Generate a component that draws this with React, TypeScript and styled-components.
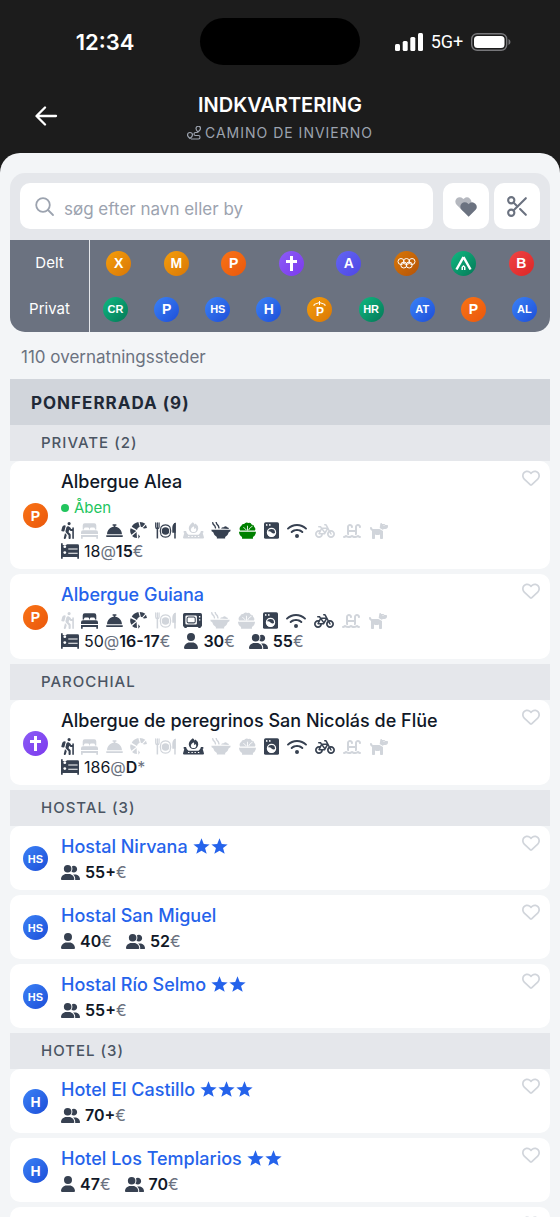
import React from "react";
import styled, { createGlobalStyle } from "styled-components";
import { FaBicycle, FaPersonHiking, FaBellConcierge, FaWaterLadder, FaDog, FaRegHeart, FaUser, FaUserGroup, FaWifi } from "react-icons/fa6";
import { FiScissors } from "react-icons/fi";

const GlobalStyle = createGlobalStyle`
  * { box-sizing: border-box; }
  html, body { margin: 0; background: #1c1c1c; }
  body { font-family: Inter, "Noto Sans", sans-serif; color: #111827; }
  button { font: inherit; border: 0; padding: 0; background: none; color: inherit; cursor: pointer; }
  h1, h2, h3, h4, p, ul { margin: 0; padding: 0; font-weight: inherit; }
  ul { list-style: none; }
  svg { display: block; flex: none; }
`;

const Screen = styled.div`
  display: flex;
  flex-direction: column;
  height: 100vh;
  overflow: hidden;
  background: #1c1c1c;
`;

const StatusBar = styled.div`
  display: grid;
  grid-template-columns: 1fr 160px 1fr;
  align-items: center;
  flex: none;
  padding-top: 18px;
  color: #fff;
`;

const Clock = styled.time`
  padding-left: 10px;
  text-align: center;
  font-size: 22px;
  line-height: 28px;
  font-weight: 600;
`;

const Island = styled.div`
  height: 47px;
  border-radius: 24px;
  background: #000;
`;

const Signals = styled.div`
  display: flex;
  align-items: center;
  justify-content: center;
  gap: 8px;
  padding-right: 14px;
  font: 400 18px/24px Roboto, sans-serif;
`;

const TitleBar = styled.header`
  display: grid;
  grid-template-columns: 60px 1fr 60px;
  flex: none;
  padding: 28px 0 8px;
  color: #fff;
`;

const BackButton = styled.button`
  display: flex;
  align-items: center;
  justify-content: flex-end;
  height: 46px;
`;

const Titles = styled.div`
  text-align: center;
`;

const Title = styled.h1`
  font-size: 20px;
  line-height: 24px;
  font-weight: 600;
`;

const Subtitle = styled.p`
  display: flex;
  align-items: center;
  justify-content: center;
  gap: 4px;
  margin-top: 4px;
  color: #9ca3af;
  font-size: 14px;
  line-height: 24px;
  letter-spacing: 1px;
`;

const Sheet = styled.main`
  flex: 1;
  min-height: 0;
  overflow-y: auto;
  scrollbar-width: none;
  padding: 20px 10px 0;
  border-radius: 20px 20px 0 0;
  background: #f3f5f7;
`;

const Filters = styled.section`
  overflow: hidden;
  border-radius: 15px;
  background: #e5e7eb;
`;

const SearchRow = styled.div`
  display: flex;
  gap: 5px;
  padding: 10px 10px 11px;
`;

const SearchBox = styled.label`
  display: flex;
  flex: 1;
  align-items: center;
  gap: 9px;
  min-width: 0;
  height: 46px;
  margin-right: 5px;
  padding: 0 14px;
  border-radius: 10px;
  background: #fff;
  color: #9ca3af;
`;

const SearchInput = styled.input`
  flex: 1;
  min-width: 0;
  padding: 5px 0 0;
  border: 0;
  outline: 0;
  background: none;
  color: #111827;
  font: 400 17px/24px Inter, sans-serif;
  &::placeholder { color: #9ca3af; opacity: 1; }
`;

const ToolButton = styled.button`
  display: flex;
  align-items: center;
  justify-content: center;
  width: 46px;
  height: 46px;
  border-radius: 10px;
  background: #fff;
  color: #6b7280;
`;

const FilterRow = styled.div`
  display: grid;
  grid-template-columns: 80px 1fr;
  height: 46px;
  background: #6b7280;
`;

const FilterLabel = styled.span`
  display: flex;
  align-items: center;
  justify-content: center;
  border-right: 1px solid #e5e7eb;
  color: #fff;
  font-size: 15px;
  line-height: 20px;
`;

const FilterBadges = styled.div`
  display: flex;
  align-items: center;
  justify-content: space-around;
`;

const tones = {
  amber: "#f59e0b, #d97706",
  orange: "#f97316, #ea580c",
  purple: "#8b5cf6, #7c3aed",
  indigo: "#6366f1, #4f46e5",
  brown: "#d97706, #b45309",
  green: "#10b981, #047857",
  red: "#ef4444, #dc2626",
  blue: "#3b82f6, #1d4ed8",
};
type Tone = keyof typeof tones;

const Badge = styled.span<{ $tone: Tone; $small?: boolean }>`
  display: flex;
  align-items: center;
  justify-content: center;
  flex: none;
  width: 25px;
  height: 25px;
  border-radius: 50%;
  background: linear-gradient(135deg, ${(p) => tones[p.$tone]});
  color: #fff;
  font: 700 ${(p) => (p.$small ? 11 : 14)}px/16px "Liberation Sans", sans-serif;
`;

const Count = styled.p`
  padding: 13px 11px 10px;
  color: #6b7280;
  font-size: 17px;
  line-height: 24px;
`;

const CityHeader = styled.h2`
  padding: 12px 21px 10px;
  background: #d1d5db;
  color: #1f2937;
  font-size: 17px;
  line-height: 24px;
  font-weight: 700;
  letter-spacing: 1px;
`;

const GroupHeader = styled.h3`
  padding: 8px 31px;
  background: #e5e7eb;
  color: #4b5563;
  font-size: 15px;
  line-height: 20px;
  font-weight: 500;
  letter-spacing: 1px;
`;

const CardList = styled.ul`
  display: flex;
  flex-direction: column;
  gap: 5px;
  padding-bottom: 5px;
`;

const Card = styled.li`
  display: grid;
  grid-template-columns: 51px 1fr 28px;
  min-height: 64px;
  padding: 8px 0 7px;
  border-radius: 10px;
  background: #fff;
`;

const CardBadge = styled.div`
  display: flex;
  align-items: center;
  padding-left: 13px;
`;

const CardBody = styled.div`
  min-width: 0;
`;

const nameText = `
  display: inline-flex;
  align-items: center;
  gap: 5px;
  font-size: 18px;
  line-height: 25px;
  font-weight: 500;
`;

const Name = styled.h4`
  ${nameText}
  display: flex;
  margin-bottom: 2px;
`;

const NameLink = styled.a`
  ${nameText}
  color: #2563eb;
  text-decoration: none;
`;

const Stars = styled.span`
  display: inline-flex;
  gap: 1px;
`;

const OpenStatus = styled.p`
  display: flex;
  align-items: center;
  gap: 5px;
  color: #22c55e;
  font-size: 15px;
  line-height: 23px;
  &::before {
    content: "";
    width: 8px;
    height: 8px;
    border-radius: 50%;
    background: #22c55e;
  }
`;

const Amenities = styled.div`
  display: flex;
  align-items: center;
  gap: 8px;
  height: 21px;
  padding-top: 2px;
`;

const Amenity = styled.span<{ $state: "on" | "off" | "vegan"; $width: number }>`
  display: flex;
  align-items: center;
  justify-content: center;
  width: ${(p) => p.$width}px;
  color: ${(p) => ({ on: "#374151", off: "#d1d5db", vegan: "#008000" })[p.$state]};
`;

const Prices = styled.div`
  display: flex;
  gap: 14px;
`;

const Price = styled.span`
  display: flex;
  align-items: center;
  font-size: 16px;
  line-height: 22px;
  b { font-weight: 600; }
  svg { margin-right: 5px; color: #374151; }
`;

const SingleIcon = styled(FaUser)`
  width: 14px;
  height: 16px;
`;

const Muted = styled.span`
  color: #6b7280;
`;

const FavoriteButton = styled.button`
  align-self: start;
  color: #d1d5db;
`;

const Star = () => (
  <svg width="17" height="17" viewBox="0 0 24 24" fill="currentColor">
    <path d="M12 .5l3.200 8 8.300.5-6.500 5.200 2.300 8.200L12 17.900l-7.300 4.500L7 14.200.5 9l8.300-.5z" />
  </svg>
);

const SearchIcon = () => (
  <svg width="21" height="21" viewBox="0 0 21 21" fill="none" stroke="currentColor" strokeWidth="1.800" strokeLinecap="round">
    <circle cx="9" cy="9" r="6.800" />
    <path d="M14 14l5 5" />
  </svg>
);

const BedIcon = () => (
  <svg width="17" height="16" viewBox="0 0 50 45" fill="currentColor">
    <path d="M11 0h28q6 0 6 6v12h-4v-2q0-4-4-4h-7q-4 0-4 4v2h-2v-2q0-4-4-4h-7q-4 0-4 4v2H5V6q0-6 6-6z" />
    <path d="M6 20h38q6 0 6 6v5H0v-5q0-6 6-6zM0 34h50v11h-5v-5H5v5H0z" />
  </svg>
);

const BunkIcon = () => (
  <svg width="18" height="16" viewBox="0 0 52 45" fill="currentColor">
    <path d="M0 0h5v5h11V3h32q4 0 4 4v38h-5v-5H5v5H0z" />
    <path d="M21 17h27M21 29h27" stroke="#fff" strokeWidth="3" />
    <circle cx="11" cy="10" r="4" fill="#fff" />
    <circle cx="11" cy="27" r="4" fill="#fff" />
  </svg>
);

const CroissantIcon = () => (
  <svg width="17" height="17" viewBox="0 0 49 49" fill="currentColor">
    <path d="M5 14Q10 3 24 0l4 14q-7 2-8 9zM28 0q10 0 16 5l-9 10-4-1zM46 8l3 9-8 2-4-2zM2 18l16 8L4 37Q-2 27 2 18zM6 40l13-11 1 17q-9 0-14-6zM24 35l5 7-5 6z" />
  </svg>
);

const PlateIcon = () => (
  <svg width="21" height="17" viewBox="0 0 62 49" fill="none" stroke="currentColor" strokeWidth="3.500">
    <path d="M2 2v12q0 5 5 5t5-5V2M7 2v16" strokeLinecap="round" />
    <path d="M7 18v30" strokeWidth="4.500" />
    <path d="M18 14a17 17 0 0 1 26 0M18 38a17 17 0 0 0 26 0M18 14q-5 12 0 24M44 14q5 12 0 24" />
    <circle cx="31" cy="26" r="11" fill="currentColor" stroke="none" />
    <path d="M59 2v46" strokeWidth="4.500" />
    <path d="M61 1q-10 4-10 16v14h10z" fill="currentColor" stroke="none" />
  </svg>
);

const StoveIcon = () => (
  <svg width="21" height="17" viewBox="0 0 62 49" fill="currentColor">
    <path d="M29 0q4 3 5 7 2-1 3-3 8 6 8 14a14 14 0 0 1-28 0Q17 8 29 0zm2 12q-8 5-8 10a8 7 0 0 0 16 0q0-3-2-5-2 3-4 3 1-4-2-8z" fillRule="evenodd" />
    <path d="M2 26h7q2 9 7 11h30q5-2 7-11h7v5h-2l4 14q0 3-3 3H3q-3 0-3-3l4-14H2z" />
    <path d="M15 42.500h4M25 42.500h4M34 42.500h4M44 42.500h4" stroke="#fff" strokeWidth="3" />
  </svg>
);

const MicrowaveIcon = () => (
  <svg width="19" height="15" viewBox="0 0 56 44" fill="currentColor">
    <path d="M5 0h46q5 0 5 5v32q0 4-4 4v3h-7v-3H11v3H4v-3q-4 0-4-4V5q0-5 5-5zm6 7q-4 0-4 4v19q0 4 4 4h26q4 0 4-4V11q0-4-4-4zm36 2v4h4V9zm0 9v4h4v-4z" fillRule="evenodd" />
    <rect x="12" y="12" width="24" height="17" rx="4" fill="none" stroke="currentColor" strokeWidth="3" />
  </svg>
);

const BowlIcon = () => (
  <svg width="20" height="17" viewBox="0 0 58 49" fill="currentColor">
    <path d="M5 2q1 5 4 7t4 8M15 1q1 5 4 7t4 9" fill="none" stroke="currentColor" strokeWidth="4" strokeLinecap="round" />
    <path d="M29 19q3-5 8-4 5-6 10 0 5 1 5 5zM1 22h56q0 6-5 7-2 9-11 14v5H17v-5Q8 38 6 29q-5-1-5-7z" />
  </svg>
);

const SaladIcon = () => (
  <svg width="17" height="17" viewBox="0 0 50 48" fill="currentColor">
    <path d="M3 24Q-1 15 7 10q1-6 8-5 5-7 13-3 7-2 9 4 8 1 8 8 5 4 2 10z" />
    <path d="M0 28h50q0 10-9 15v5H9v-5Q0 38 0 28z" />
    <path d="M25 24V10M22 23 13 14M28 23q4-9 12-12" stroke="#fff" strokeWidth="2.500" fill="none" />
  </svg>
);

const WasherIcon = () => (
  <svg width="15" height="17" viewBox="0 0 44 49">
    <rect width="44" height="49" rx="5" fill="currentColor" />
    <circle cx="8" cy="8" r="2.500" fill="#fff" />
    <circle cx="17" cy="8" r="2.500" fill="#fff" />
    <circle cx="22" cy="30" r="12" fill="none" stroke="#fff" strokeWidth="3.500" />
    <path d="M12 27q5-2 10 3t11 2a11 11 0 0 1-22 0z" fill="#fff" />
  </svg>
);

const RouteIcon = () => (
  <svg width="14" height="14" viewBox="0 0 28 28" fill="none" stroke="currentColor" strokeWidth="2.400">
    <path d="M6 25q-5-4-5-7a5 5 0 0 1 10 0q0 3-5 7zM22 12q-4-4-4-7a4 4 0 0 1 9 0q0 3-5 7zM21 13h-4q-3 0-3 3t3 3h6q3 0 3 3.500T23 26H8" />
  </svg>
);

const CrossIcon = () => (
  <svg width="15" height="17" viewBox="0 0 15 17" fill="#fff">
    <path d="M6 1h3v4h4v3H9v8H6V8H2V5h4z" />
  </svg>
);

const RingsIcon = () => (
  <svg width="19" height="13" viewBox="0 0 19 13" fill="none" stroke="#fff">
    <circle cx="4" cy="4.500" r="3" />
    <circle cx="9.500" cy="4.500" r="3" />
    <circle cx="15" cy="4.500" r="3" />
    <circle cx="6.800" cy="8" r="3" />
    <circle cx="12.200" cy="8" r="3" />
  </svg>
);

const TentIcon = () => (
  <svg width="17" height="16" viewBox="0 0 17 16" fill="none" stroke="#fff">
    <path d="M8.500 2 1.500 14.500M8.500 2l7 12.500" strokeWidth="2.500" />
    <path d="M6.500 15v-3l2-2 2 2v3z" fill="#fff" stroke="none" />
    <path d="M8.500 12v3" stroke="#0a8f66" />
  </svg>
);

const ShelterBadge = styled.span`
  display: grid;
  justify-items: center;
  font-size: 12px;
  line-height: 11px;
`;

const ShelterIcon = () => (
  <ShelterBadge>
    <svg width="13" height="6" viewBox="0 0 13 6" fill="none" stroke="#fff">
      <path d="M1 5V3.500L6.500 1.500 12 3.500V5M6.500 0v4" />
    </svg>
    P
  </ShelterBadge>
);

const DoubleHeartIcon = () => {
  const heart = "M9 16.500 1.700 9.200a4.700 4.700 0 0 1 0-6.600 4.700 4.700 0 0 1 6.600 0L9 3.300l.7-.7a4.700 4.700 0 0 1 6.600 6.600z";
  return (
    <svg width="23" height="21" viewBox="0 0 23 21" fill="currentColor">
      <path d={heart} opacity="0.500" transform="scale(.94)" />
      <path d={heart} transform="translate(5 5) scale(.96)" />
    </svg>
  );
};

const ArrowIcon = () => (
  <svg width="25" height="22" viewBox="0 0 25 22" fill="none" stroke="#fff" strokeWidth="2.300" strokeLinecap="round" strokeLinejoin="round">
    <path d="M10 2.500 1.500 11l8.500 8.500M2 11h19" />
  </svg>
);

const SignalIcon = () => (
  <svg width="28" height="18" viewBox="0 0 28 18" fill="#fff">
    <rect y="11" width="5" height="7" rx="1.500" />
    <rect x="7.700" y="8" width="5" height="10" rx="1.500" />
    <rect x="15.300" y="4" width="5" height="14" rx="1.500" />
    <rect x="23" width="5" height="18" rx="1.500" />
  </svg>
);

const BatteryIcon = () => (
  <svg width="40" height="18" viewBox="0 0 40 18">
    <rect x=".7" y=".7" width="35" height="16.600" rx="5.500" fill="none" stroke="#77777a" strokeWidth="1.400" />
    <rect x="3" y="3" width="30.500" height="12" rx="3.500" fill="#fff" />
    <path d="M37.500 6q2 1 2 3t-2 3z" fill="#77777a" />
  </svg>
);

type BadgeData = { tone: Tone; mark: string | React.ReactElement; label: string };

const sharedTypes: BadgeData[] = [
  { tone: "amber", mark: "X", label: "Xunta" },
  { tone: "amber", mark: "M", label: "Municipal" },
  { tone: "orange", mark: "P", label: "Private" },
  { tone: "purple", mark: <CrossIcon />, label: "Parochial" },
  { tone: "indigo", mark: "A", label: "Association" },
  { tone: "brown", mark: <RingsIcon />, label: "Sport" },
  { tone: "green", mark: <TentIcon />, label: "Camping" },
  { tone: "red", mark: "B", label: "Bivouac" },
];

const privateTypes: BadgeData[] = [
  { tone: "green", mark: "CR", label: "Casa rural" },
  { tone: "blue", mark: "P", label: "Pension" },
  { tone: "blue", mark: "HS", label: "Hostal" },
  { tone: "blue", mark: "H", label: "Hotel" },
  { tone: "amber", mark: <ShelterIcon />, label: "Parador" },
  { tone: "green", mark: "HR", label: "Hotel rural" },
  { tone: "blue", mark: "AT", label: "Apartment" },
  { tone: "orange", mark: "P", label: "Posada" },
  { tone: "blue", mark: "AL", label: "Alojamiento" },
];

const amenityIcons: Record<string, { width: number; icon: React.ReactElement }> = {
  hiker: { width: 12, icon: <FaPersonHiking size={17} /> },
  bed: { width: 17, icon: <BedIcon /> },
  bell: { width: 16, icon: <FaBellConcierge size={17} /> },
  croissant: { width: 17, icon: <CroissantIcon /> },
  plate: { width: 20, icon: <PlateIcon /> },
  stove: { width: 20, icon: <StoveIcon /> },
  microwave: { width: 19, icon: <MicrowaveIcon /> },
  bowl: { width: 20, icon: <BowlIcon /> },
  salad: { width: 17, icon: <SaladIcon /> },
  washer: { width: 15, icon: <WasherIcon /> },
  wifi: { width: 20, icon: <FaWifi size={20} /> },
  bike: { width: 20, icon: <FaBicycle size={20} /> },
  pool: { width: 18, icon: <FaWaterLadder size={18} /> },
  dog: { width: 19, icon: <FaDog size={18} /> },
};

type PriceData = { kind: "bunk" | "single" | "double"; beds?: string; amount: string; suffix?: string };
type Lodging = {
  name?: string;
  link?: boolean;
  stars?: number;
  open?: boolean;
  badge?: BadgeData;
  amenities?: string;
  prices?: PriceData[];
};

const [, , shared, parish] = sharedTypes;
const hostal = privateTypes[2];
const hotel = privateTypes[3];

/* "+" marks an available amenity, "-" a missing one and "*" a vegan menu */
const groups: { title: string; items: Lodging[] }[] = [
  {
    title: "PRIVATE (2)",
    items: [
      {
        name: "Albergue Alea",
        open: true,
        badge: shared,
        amenities: "+hiker -bed +bell +croissant +plate -stove +bowl *salad +washer +wifi -bike -pool -dog",
        prices: [{ kind: "bunk", beds: "18", amount: "15" }],
      },
      {
        name: "Albergue Guiana",
        link: true,
        badge: shared,
        amenities: "-hiker +bed +bell +croissant -plate +microwave -bowl -salad +washer +wifi +bike -pool -dog",
        prices: [
          { kind: "bunk", beds: "50", amount: "16-17" },
          { kind: "single", amount: "30" },
          { kind: "double", amount: "55" },
        ],
      },
    ],
  },
  {
    title: "PAROCHIAL",
    items: [
      {
        name: "Albergue de peregrinos San Nicolás de Flüe",
        badge: parish,
        amenities: "+hiker -bed -bell -croissant -plate +stove -bowl -salad +washer +wifi +bike -pool -dog",
        prices: [{ kind: "bunk", beds: "186", amount: "D", suffix: "*" }],
      },
    ],
  },
  {
    title: "HOSTAL (3)",
    items: [
      { name: "Hostal Nirvana", link: true, stars: 2, badge: hostal, prices: [{ kind: "double", amount: "55+" }] },
      {
        name: "Hostal San Miguel",
        link: true,
        badge: hostal,
        prices: [
          { kind: "single", amount: "40" },
          { kind: "double", amount: "52" },
        ],
      },
      { name: "Hostal Río Selmo", link: true, stars: 2, badge: hostal, prices: [{ kind: "double", amount: "55+" }] },
    ],
  },
  {
    title: "HOTEL (3)",
    items: [
      { name: "Hotel El Castillo", link: true, stars: 3, badge: hotel, prices: [{ kind: "double", amount: "70+" }] },
      {
        name: "Hotel Los Templarios",
        link: true,
        stars: 2,
        badge: hotel,
        prices: [
          { kind: "single", amount: "47" },
          { kind: "double", amount: "70" },
        ],
      },
      {},
    ],
  },
];

const TypeBadge = ({ data }: { data: BadgeData }) => (
  <Badge $tone={data.tone} $small={typeof data.mark === "string" && data.mark.length > 1}>
    {data.mark}
  </Badge>
);

const priceIcons = {
  bunk: <BunkIcon />,
  single: <SingleIcon />,
  double: <FaUserGroup size={19} />,
};

const FilterGroup = ({ label, types }: { label: string; types: BadgeData[] }) => (
  <FilterRow>
    <FilterLabel>{label}</FilterLabel>
    <FilterBadges>
      {types.map((t) => (
        <button key={t.label} type="button" aria-label={t.label}>
          <TypeBadge data={t} />
        </button>
      ))}
    </FilterBadges>
  </FilterRow>
);

const LodgingCard = ({ item }: { item: Lodging }) => (
  <Card>
    <CardBadge>{item.badge && <TypeBadge data={item.badge} />}</CardBadge>
    <CardBody>
      {item.name && (
        <Name>
          {item.link ? (
            <NameLink href="#">
              {item.name}
              {item.stars && <Stars>{Array.from({ length: item.stars }, (_, i) => <Star key={i} />)}</Stars>}
            </NameLink>
          ) : (
            item.name
          )}
        </Name>
      )}
      {item.open && <OpenStatus>Åben</OpenStatus>}
      {item.amenities && (
        <Amenities>
          {item.amenities.split(" ").map((code) => {
            const { width, icon } = amenityIcons[code.slice(1)];
            const state = code[0] === "+" ? "on" : code[0] === "*" ? "vegan" : "off";
            return <Amenity key={code} $state={state} $width={width}>{icon}</Amenity>;
          })}
        </Amenities>
      )}
      {item.prices && (
        <Prices>
          {item.prices.map((p) => (
            <Price key={p.kind}>
              {priceIcons[p.kind]}
              {p.beds}
              {p.beds && <Muted>@</Muted>}
              <b>{p.amount}</b>
              <Muted>{p.suffix ?? "€"}</Muted>
            </Price>
          ))}
        </Prices>
      )}
    </CardBody>
    <FavoriteButton type="button" aria-label="Favorit">
      <FaRegHeart size={18} />
    </FavoriteButton>
  </Card>
);

export default function App() {
  return (
    <Screen>
      <GlobalStyle />
      <StatusBar>
        <Clock>12:34</Clock>
        <Island />
        <Signals>
          <SignalIcon />
          5G+
          <BatteryIcon />
        </Signals>
      </StatusBar>
      <TitleBar>
        <BackButton type="button" aria-label="Tilbage">
          <ArrowIcon />
        </BackButton>
        <Titles>
          <Title>INDKVARTERING</Title>
          <Subtitle>
            <RouteIcon />
            CAMINO DE INVIERNO
          </Subtitle>
        </Titles>
      </TitleBar>
      <Sheet>
        <Filters>
          <SearchRow>
            <SearchBox>
              <SearchIcon />
              <SearchInput type="text" placeholder="søg efter navn eller by" aria-label="søg efter navn eller by" />
            </SearchBox>
            <ToolButton type="button" aria-label="Favoritter">
              <DoubleHeartIcon />
            </ToolButton>
            <ToolButton type="button" aria-label="Klip">
              <FiScissors size={25} />
            </ToolButton>
          </SearchRow>
          <FilterGroup label="Delt" types={sharedTypes} />
          <FilterGroup label="Privat" types={privateTypes} />
        </Filters>
        <Count>110 overnatningssteder</Count>
        <CityHeader>PONFERRADA (9)</CityHeader>
        {groups.map((group) => (
          <section key={group.title}>
            <GroupHeader>{group.title}</GroupHeader>
            <CardList>
              {group.items.map((item, i) => (
                <LodgingCard key={item.name ?? i} item={item} />
              ))}
            </CardList>
          </section>
        ))}
      </Sheet>
    </Screen>
  );
}
